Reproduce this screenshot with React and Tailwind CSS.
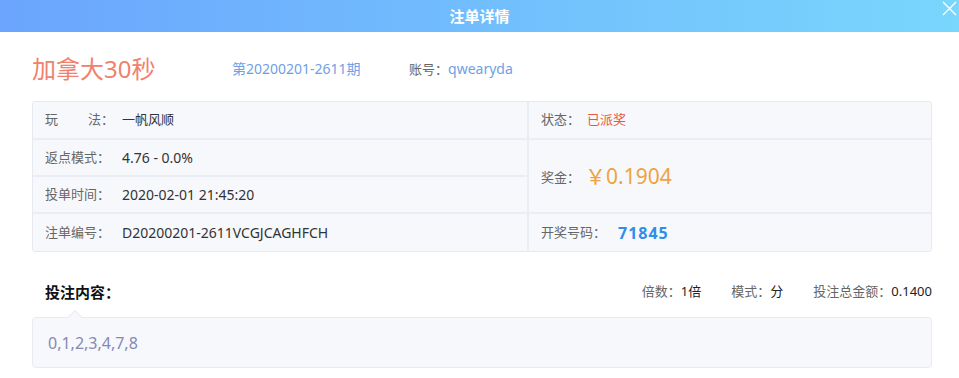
import React from "react";

const font = { fontFamily: '"Noto Sans", "Noto Sans CJK SC", sans-serif' };

function Cell({ children, className = "" }) {
  return (
    <div className={"bg-[#f7f8fc] flex items-center px-[12px] text-[13px] " + className}>
      {children}
    </div>
  );
}

export default function App() {
  return (
    <div className="w-[959px] h-[378px] bg-white overflow-hidden relative" style={font}>
      {/* header */}
      <div className="h-[32px] bg-gradient-to-r from-[#6ba5fd] to-[#79d6fc] flex items-center justify-center relative">
        <span className="text-white text-[15px] font-semibold leading-none">注单详情</span>
        <svg className="absolute right-[2px] top-[1px]" width="15" height="15" viewBox="0 0 15 15">
          <path d="M1 1 L14 14 M14 1 L1 14" stroke="#ffffff" strokeWidth="1.4" />
        </svg>
      </div>

      {/* title line */}
      <div className="h-[69px] flex items-center pl-[32px] pt-[5px]">
        <span className="text-[24px] text-[#f1806d] leading-none w-[200px]">加拿大30秒</span>
        <span className="text-[14px] text-[#6f9fe4] leading-none w-[177px]">第20200201-2611期</span>
        <span className="text-[13px] text-[#666] leading-none">账号：</span>
        <span className="text-[14px] text-[#6f9fe4] leading-none">qwearyda</span>
      </div>

      {/* table */}
      <div className="mx-[32px] w-[900px] grid grid-cols-[494px_1fr] grid-rows-[36px_35px_35px_37px] gap-[2px] bg-[#eaedf3] border border-[#e6e9ef] rounded-[3px] overflow-hidden">
        <Cell>
          <span className="text-[#666] w-[77px] flex justify-between pr-[8px]"><span>玩</span><span>法：</span></span>
          <span className="text-[#333]">一帆风顺</span>
        </Cell>
        <Cell>
          <span className="text-[#666] w-[46px]">状态：</span>
          <span className="text-[#e8573b]">已派奖</span>
        </Cell>
        <Cell>
          <span className="text-[#666] w-[77px]">返点模式：</span>
          <span className="text-[#333] text-[14px]">4.76 - 0.0%</span>
        </Cell>
        <Cell className="row-span-2">
          <span className="text-[#666] w-[44px] pt-[4px]">奖金：</span>
          <span className="text-[#efa33f] text-[21px] leading-none">￥0.1904</span>
        </Cell>
        <Cell>
          <span className="text-[#666] w-[77px]">投单时间：</span>
          <span className="text-[#333] text-[14px]">2020-02-01 21:45:20</span>
        </Cell>
        <Cell>
          <span className="text-[#666] w-[77px]">注单编号：</span>
          <span className="text-[#333] text-[14px]">D20200201-2611VCGJCAGHFCH</span>
        </Cell>
        <Cell>
          <span className="text-[#666] w-[77px]">开奖号码：</span>
          <span className="text-[#2f8eec] text-[16px] font-bold tracking-[1px]">71845</span>
        </Cell>
      </div>

      {/* bet content */}
      <div className="mx-[32px] w-[900px] mt-[27px] flex items-center justify-between h-[26px]">
        <span className="pl-[13px] text-[15px] font-bold text-[#111]">投注内容：</span>
        <div className="flex items-center text-[13px]">
          <span className="text-[#666]">倍数：</span>
          <span className="text-[#222]">1倍</span>
          <span className="text-[#666] ml-[30px]">模式：</span>
          <span className="text-[#222]">分</span>
          <span className="text-[#666] ml-[30px]">投注总金额：</span>
          <span className="text-[#222]">0.1400</span>
        </div>
      </div>
      <div className="mx-[32px] w-[900px] mt-[12px] relative h-[51px] bg-[#f7f8fc] border border-[#e8ebf2] rounded-[4px] flex items-center pl-[15px]">
        <div className="absolute left-[37px] top-[-6px] w-[10px] h-[10px] bg-[#f7f8fc] border-l border-t border-[#e8ebf2] rotate-45" />
        <span className="text-[16px] text-[#8589b5]">0,1,2,3,4,7,8</span>
      </div>
    </div>
  );
}
